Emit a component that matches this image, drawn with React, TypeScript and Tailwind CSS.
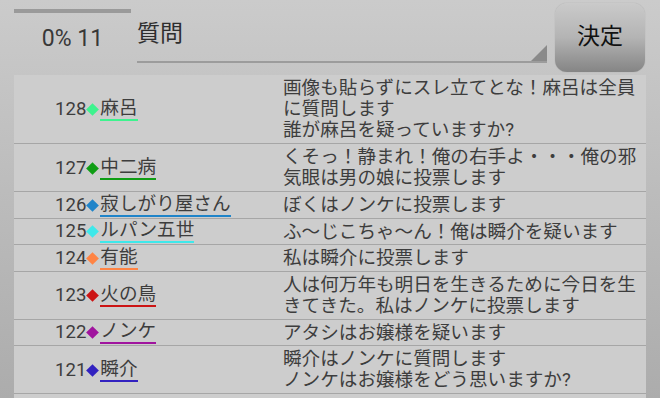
import React from "react";

interface Post {
  no: number;
  name: string;
  color: string;
  lines: string[];
  rows: 1 | 2 | 3;
}

const POSTS: Post[] = [
  {
    no: 128,
    name: "麻呂",
    color: "#3ef38e",
    lines: ["画像も貼らずにスレ立てとな！麻呂は全員に質問します", "誰が麻呂を疑っていますか?"],
    rows: 3,
  },
  { no: 127, name: "中二病", color: "#0f9d14", lines: ["くそっ！静まれ！俺の右手よ・・・俺の邪気眼は男の娘に投票します"], rows: 2 },
  { no: 126, name: "寂しがり屋さん", color: "#1f84c9", lines: ["ぼくはノンケに投票します"], rows: 1 },
  { no: 125, name: "ルパン五世", color: "#3ee8ea", lines: ["ふ～じこちゃ～ん！俺は瞬介を疑います"], rows: 1 },
  { no: 124, name: "有能", color: "#ff8444", lines: ["私は瞬介に投票します"], rows: 1 },
  { no: 123, name: "火の鳥", color: "#cc1414", lines: ["人は何万年も明日を生きるために今日を生きてきた。私はノンケに投票します"], rows: 2 },
  { no: 122, name: "ノンケ", color: "#a0149e", lines: ["アタシはお嬢様を疑います"], rows: 1 },
  {
    no: 121,
    name: "瞬介",
    color: "#3222c0",
    lines: ["瞬介はノンケに質問します", "ノンケはお嬢様をどう思いますか?"],
    rows: 2,
  },
];

// row height incl. 1px border, by number of wrapped lines
const ROW_H: Record<number, string> = {
  1: "h-[26.5px]",
  2: "h-[48px]",
  3: "h-[69px]",
};

function PostRow({ post }: { post: Post }) {
  return (
    <div className={`flex overflow-hidden border-b border-[#a6a6a6] pt-[3px] ${ROW_H[post.rows]}`}>
      {/* name column */}
      <div className="flex w-[269px] shrink-0 items-center pl-[41px] pb-[2px]">
        <span className="leading-[21px]">{post.no}</span>
        <span className="mx-[2px] inline-block h-[9px] w-[9px] rotate-45" style={{ backgroundColor: post.color }} />
        <span
          className="ml-[1px] inline-block border-b-2 leading-[21px]"
          style={{ borderColor: post.color }}
        >
          {post.name}
        </span>
      </div>
      {/* message column */}
      <div className="w-[358px] leading-[21px]">
        {post.lines.map((l, i) => (
          <div key={i}>{l}</div>
        ))}
      </div>
    </div>
  );
}

export default function App() {
  return (
    <div
      className="flex h-[398px] w-[660px] flex-col overflow-hidden bg-gradient-to-b from-[#cbcbcb] to-[#acacac] text-[#3d3d3d]"
      style={{ fontFamily: "Roboto, 'Noto Sans CJK JP', sans-serif" }}
    >
      {/* Header */}
      <div className="flex h-[75px] shrink-0 items-start">
        <div className="ml-[14px] w-[117px] pt-[9px]">
          <div className="h-[4px] bg-[#9a9a9a]" />
          <div className="mt-[12px] text-center text-[23px] leading-[28px] text-[#383838]">0% 11</div>
        </div>

        <div className="relative ml-[6px] h-[63px] w-[410px] border-b-2 border-[#9c9c9c] pt-[19px]">
          <div className="text-[23px] leading-[30px] text-[#2e2e2e]">質問</div>
          <div className="absolute right-0 bottom-0 h-0 w-0 border-b-[16px] border-l-[16px] border-b-[#8a8a8a] border-l-transparent" />
        </div>

        <button className="mt-[3px] ml-[8px] flex h-[69px] w-[90px] items-center justify-center rounded-[12px] bg-gradient-to-b from-[#cacaca] via-[#b4b4b4] to-[#858585] text-[23px] text-[#111] shadow-[0_0_1px_rgba(0,0,0,0.25)]">
          決定
        </button>
      </div>

      {/* Log */}
      <div className="mx-[14px] flex-1 bg-[#cdcdcd] text-[18.6px]">
        {POSTS.map((p) => (
          <PostRow key={p.no} post={p} />
        ))}
      </div>
    </div>
  );
}
